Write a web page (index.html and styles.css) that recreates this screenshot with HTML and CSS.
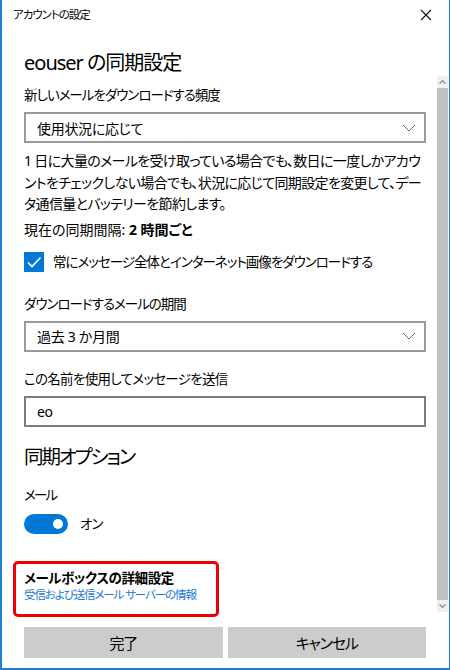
FILE: index.html
```html
<!DOCTYPE html>
<html lang="ja">
<head>
<meta charset="utf-8">
<link rel="stylesheet" href="styles.css">
</head>
<body>
<div class="window">
  <div class="titlebar">
    <span class="title">アカウントの設定</span>
    <svg class="close" width="12" height="12" viewBox="0 0 12 12"><path d="M1 1L11 11M11 1L1 11" stroke="#111" stroke-width="1.1" fill="none"/></svg>
  </div>
  <div class="content">
    <h1 class="h1">eouser の同期設定</h1>
    <div class="label l1">新しいメールをダウンロードする頻度</div>
    <div class="select">
      <span>使用状況に応じて</span>
      <svg class="chev" width="14" height="8" viewBox="0 0 14 8"><path d="M1 1L7 7L13 1" stroke="#666" stroke-width="1" fill="none"/></svg>
    </div>
    <p class="desc">1 日に大量のメールを受け取っている場合でも、数日に一度しかアカウ<br>ントをチェックしない場合でも、状況に応じて同期設定を変更して、デー<br>タ通信量とバッテリーを節約します。</p>
    <div class="label current">現在の同期間隔: <b>2 時間ごと</b></div>
    <div class="check-row">
      <span class="checkbox"><svg width="20" height="20" viewBox="0 0 20 20"><path d="M4 10.5L8 14.5L16.5 5.5" stroke="#fff" stroke-width="1.6" fill="none"/></svg></span>
      <span class="label">常にメッセージ全体とインターネット画像をダウンロードする</span>
    </div>
    <div class="label l2">ダウンロードするメールの期間</div>
    <div class="select">
      <span>過去 3 か月間</span>
      <svg class="chev" width="14" height="8" viewBox="0 0 14 8"><path d="M1 1L7 7L13 1" stroke="#666" stroke-width="1" fill="none"/></svg>
    </div>
    <div class="label l3">この名前を使用してメッセージを送信</div>
    <div class="input">eo</div>
    <h2 class="h2">同期オプション</h2>
    <div class="label l4">メール</div>
    <div class="toggle-row">
      <span class="toggle"><span class="knob"></span></span>
      <span class="label">オン</span>
    </div>
    <div class="advanced">
      <div class="adv-title">メールボックスの詳細設定</div>
      <div class="adv-link">受信および送信メール サーバーの情報</div>
    </div>
    <div class="buttons">
      <div class="btn">完了</div>
      <div class="btn">キャンセル</div>
    </div>
  </div>
  <div class="scrollbar">
    <svg class="arrow" width="11" height="12" viewBox="0 0 11 12"><path d="M2.5 7.5L5.5 4.5L8.5 7.5" stroke="#8a8a8a" stroke-width="1.2" fill="none"/></svg>
    <div class="thumb"></div>
    <svg class="arrow" width="11" height="12" viewBox="0 0 11 12"><path d="M2.5 4.5L5.5 7.5L8.5 4.5" stroke="#8a8a8a" stroke-width="1.2" fill="none"/></svg>
  </div>
</div>
</body>
</html>
```

FILE: styles.css
```css
* { box-sizing: border-box; }
html, body { margin: 0; padding: 0; background: #fff; }
body {
  font-family: "Noto Sans", "Noto Sans CJK JP", sans-serif;
  font-feature-settings: "palt";
  color: #000;
}
.window {
  position: relative;
  width: 450px;
  height: 670px;
  border-left: 2px solid #1b80d6;
  border-right: 1px solid #1b80d6;
  border-bottom: 2px solid #1b80d6;
  background: #fff;
  overflow: hidden;
}
.titlebar {
  height: 32px;
  display: flex;
  align-items: center;
  justify-content: space-between;
  padding: 0 17px 2px 11px;
}
.title { font-size: 11.5px; line-height: 16px; letter-spacing: -1px; }
.close { display: block; }
.content {
  display: flex;
  flex-direction: column;
  padding: 0 23px 0 22px;
}
.h1, .h2 {
  margin: 17px 0 0;
  font-size: 20px;
  line-height: 28px;
  font-weight: 400;
  letter-spacing: -1px;
}
.h2 { margin-top: 16px; font-size: 19.5px; letter-spacing: -2.1px; }
.label { font-size: 13.5px; line-height: 20px; letter-spacing: -1px; }
.l1 { margin-top: 8px; }
.l2 { margin-top: 22px; }
.l3 { margin-top: 17px; letter-spacing: -0.7px; }
.l4 { margin-top: 14px; letter-spacing: -1.8px; }
.current { margin-top: 5px; font-size: 14px; letter-spacing: 0; }
.current b { font-weight: 700; }
.select, .input {
  margin-top: 7px;
  height: 31px;
  border: 2px solid #9b9b9b;
  display: flex;
  align-items: center;
  justify-content: space-between;
  padding: 0 8px 0 11px;
  font-size: 14px;
  letter-spacing: -0.3px;
}
.input { border-color: #7d7d7d; }
.chev { display: block; }
.desc {
  margin: 7px 0 0;
  font-size: 14px;
  line-height: 21.5px;
  letter-spacing: -0.65px;
  white-space: nowrap;
}
.check-row {
  margin-top: 12px;
  display: flex;
  align-items: center;
  gap: 9px;
}
.checkbox {
  width: 20px;
  height: 20px;
  background: #0078d7;
  display: block;
  flex: none;
}
.checkbox svg { display: block; }
.toggle-row {
  margin-top: 9px;
  display: flex;
  align-items: center;
  gap: 12px;
}
.toggle {
  width: 44px;
  height: 20px;
  border-radius: 10px;
  background: #0078d7;
  display: flex;
  align-items: center;
  justify-content: flex-end;
  padding-right: 5px;
}
.knob {
  width: 10px;
  height: 10px;
  border-radius: 50%;
  background: #fff;
}
.advanced {
  margin: 27px 0 0 -11px;
  width: 206px;
  height: 56px;
  border: 3px solid #ee0000;
  border-radius: 5px;
  padding: 5px 0 0 8px;
}
.adv-title { font-size: 13.5px; line-height: 18px; font-weight: 700; letter-spacing: -0.4px; }
.adv-link { font-size: 11.5px; line-height: 16px; color: #1779d3; letter-spacing: -1.1px; white-space: nowrap; }
.buttons {
  margin-top: 10px;
  display: flex;
  gap: 5px;
}
.btn {
  flex: 1;
  height: 31px;
  background: #cccccc;
  display: flex;
  align-items: center;
  justify-content: center;
  font-size: 15px;
  letter-spacing: -1.2px;
}
.scrollbar {
  position: absolute;
  top: 76px;
  right: 1px;
  width: 11px;
  height: 536px;
  display: flex;
  flex-direction: column;
  background: #f0f0f0;
}
.arrow { display: block; flex: none; }
.thumb { flex: 1; background: #c2c2c2; }
```
